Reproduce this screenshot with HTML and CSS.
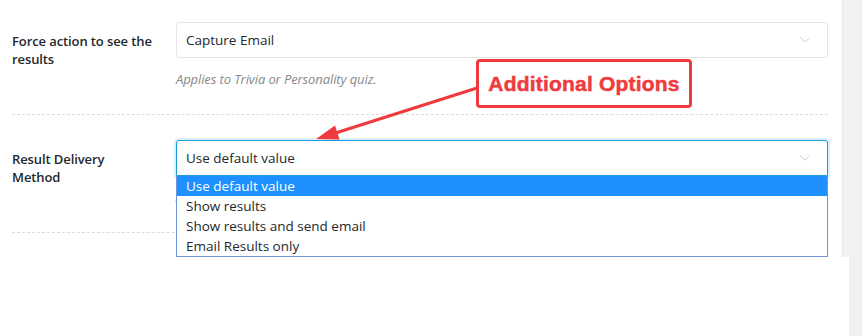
FILE: index.html
```html
<!DOCTYPE html>
<html>

<head>
    <link rel="stylesheet" href="styles.css">
</head>

<body>
    <div class="page">
        <div class="settings">
            <div class="field-row first">
                <div class="field-label">Force action to see the results</div>
                <div class="field-control">
                    <div class="select">
                        <span>Capture Email</span>
                        <svg class="chevron" width="12" height="8" viewBox="0 0 12 8">
                            <polyline points="1,1.5 6,6 11,1.5" fill="none" stroke="#cfcfcf" stroke-width="1"/>
                        </svg>
                    </div>
                    <div class="help">Applies to Trivia or Personality quiz.</div>
                </div>
            </div>

            <div class="field-row">
                <div class="field-label">Result Delivery Method</div>
                <div class="field-control">
                    <div class="select-wrap">
                        <div class="select focused">
                            <span>Use default value</span>
                            <svg class="chevron" width="12" height="8" viewBox="0 0 12 8">
                                <polyline points="1,1.5 6,6 11,1.5" fill="none" stroke="#cfcfcf" stroke-width="1"/>
                            </svg>
                        </div>
                        <ul class="options">
                            <li class="active">Use default value</li>
                            <li>Show results</li>
                            <li>Show results and send email</li>
                            <li>Email Results only</li>
                        </ul>
                    </div>
                    <div class="help">Applies to Trivia or Personality quiz.</div>
                </div>
            </div>

            <!-- annotation over the form -->
            <div class="callout">Additional Options</div>
            <svg class="arrow" width="842" height="336" viewBox="0 0 842 336">
                <line x1="477" y1="88" x2="334" y2="133.5" stroke="#ef3b3d" stroke-width="3"/>
                <polygon points="316,139 335,125.6 339.5,139.5" fill="#ef3b3d"/>
            </svg>
        </div>
        <div class="side"></div>
    </div>
</body>

</html>
```

FILE: styles.css
```css
html, body {
    margin: 0;
    padding: 0;
    background-color: #fff;
}

.page {
    display: flex;
    height: 336px;
    overflow: hidden;
    font-family: "Open Sans", "Noto Sans", sans-serif;
    color: #23282d;
}

.settings {
    position: relative;
    width: 842px;
    flex: none;
}

.side {
    position: relative;
    flex: 1;
    background-color: #f1f1f1;
    border-left: 1px solid #e6e6e6;
}

.side::after {
    content: "";
    position: absolute;
    left: -1px;
    top: 257px;
    width: 7px;
    bottom: 0;
    background-color: #fff;
}

.field-row {
    display: flex;
    margin: 0 14px 0 12px;
    padding: 25px 0 26px;
    border-bottom: 1px dashed #dcdcdc;
}

.field-row.first {
    padding-top: 22px;
}

.field-label {
    width: 142px;
    margin-right: 22px;
    padding-top: 10px;
    font-size: 13px;
    font-weight: 600;
    line-height: 18px;
    letter-spacing: -0.1px;
}

.field-control {
    flex: 1;
}

.select-wrap {
    position: relative;
}

.select {
    height: 34px;
    display: flex;
    align-items: center;
    justify-content: space-between;
    padding: 0 16px 0 9px;
    border: 1px solid #e5e5e5;
    border-radius: 3px;
    font-size: 13.5px;
    background-color: #fff;
}

.select.focused {
    border-color: #1c9bd8;
    box-shadow: 0 0 0 2px #d9f0fb;
    border-radius: 3px 3px 0 0;
}

.chevron {
    display: block;
}

.options {
    position: absolute;
    top: 36px;
    left: 0;
    right: 0;
    margin: 0;
    padding: 0;
    list-style: none;
    background-color: #fff;
    border: 1px solid #6e93d6;
    border-top: none;
    z-index: 5;
}

.options li {
    height: 20px;
    line-height: 20px;
    padding-left: 9px;
    font-size: 13.5px;
}

.options li.active {
    background-color: #1e90ff;
    color: #fff;
}

.help {
    margin-top: 12px;
    font-size: 13px;
    line-height: 18px;
    font-style: italic;
    color: #888;
    letter-spacing: -0.1px;
}

.callout {
    position: absolute;
    left: 476px;
    top: 59px;
    width: 210px;
    height: 43px;
    display: flex;
    align-items: center;
    justify-content: center;
    border: 3px solid #ef3b3d;
    border-radius: 4px;
    background-color: #fff;
    font-family: "Liberation Sans", Arial, sans-serif;
    font-weight: bold;
    font-size: 21px;
    letter-spacing: 0.2px;
    -webkit-text-stroke: 0.5px #ef3b3d;
    color: #ef3b3d;
    z-index: 6;
}

.arrow {
    position: absolute;
    left: 0;
    top: 0;
    z-index: 7;
    pointer-events: none;
}
```
